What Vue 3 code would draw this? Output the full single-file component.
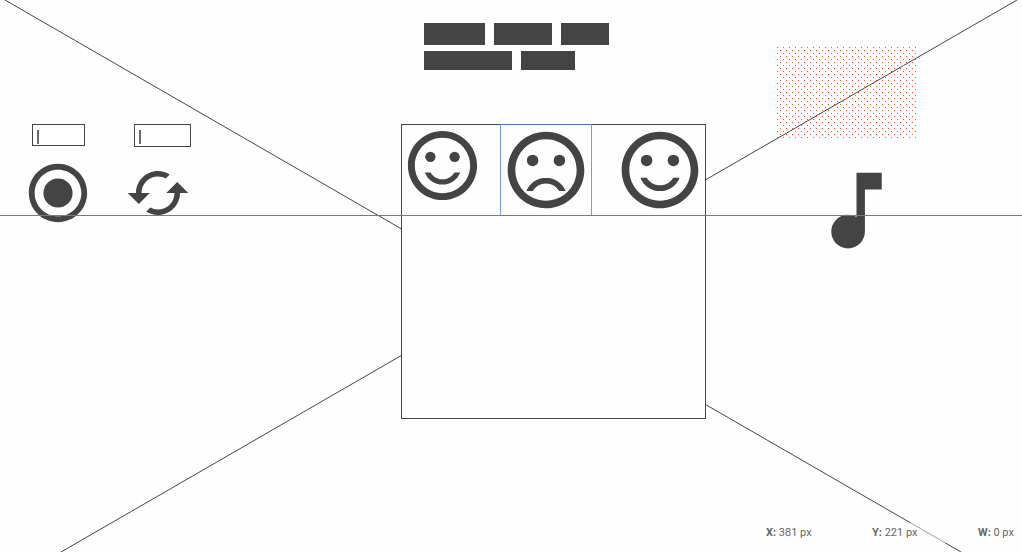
<script setup>
import { ref } from 'vue'

const RING =
  'M11.99 2C6.47 2 2 6.48 2 12s4.47 10 9.99 10C17.52 22 22 17.52 22 12S17.52 2 11.99 2zM12 20c-4.42 0-8-3.58-8-8s3.58-8 8-8 8 3.58 8 8-3.58 8-8 8z'
const SMILE =
  'M12 16c-1.48 0-2.75-.81-3.45-2H6.88c.8 2.05 2.79 3.5 5.12 3.5s4.32-1.45 5.12-3.5h-1.67c-.7 1.19-1.97 2-3.45 2z'
const FROWN =
  'M12 14c-2.33 0-4.32 1.45-5.12 3.5h1.67c.69-1.19 1.97-2 3.45-2s2.75.81 3.45 2h1.67c-.8-2.05-2.79-3.5-5.12-3.5z'

const faces = [
  { name: 'Happy', kind: 'small', mouth: SMILE },
  { name: 'Sad', kind: 'selected', mouth: FROWN },
  { name: 'Cheerful', kind: 'last', mouth: SMILE },
]
const readings = [
  { label: 'X:', value: '381 px' },
  { label: 'Y:', value: '221 px' },
  { label: 'W:', value: '0 px' },
]
const first = ref('')
const second = ref('')
</script>

<template>
  <main class="canvas">
    <svg class="diagonals" width="1022" height="552" aria-hidden="true">
      <path d="M5 0L961 552M1017 0L61 552" />
    </svg>

    <svg class="dots" width="139" height="91" aria-hidden="true">
      <defs>
        <pattern id="dot-grid" width="6" height="6" patternUnits="userSpaceOnUse">
          <rect width="1" height="1" />
          <rect x="3" y="3" width="1" height="1" />
        </pattern>
      </defs>
      <rect width="139" height="91" fill="url(#dot-grid)" />
    </svg>

    <div class="blocks" aria-hidden="true">
      <div class="block-row">
        <span class="block b61"></span>
        <span class="block b58"></span>
        <span class="block b48"></span>
      </div>
      <div class="block-row short">
        <span class="block b88"></span>
        <span class="block b54"></span>
      </div>
    </div>

    <div class="field field-a">
      <input v-model="first" type="text" aria-label="First value" />
      <span class="caret"></span>
    </div>
    <div class="field field-b">
      <input v-model="second" type="text" aria-label="Second value" />
      <span class="caret"></span>
    </div>

    <button class="icon record" type="button" aria-label="Record">
      <svg viewBox="0 0 24 24"><path :d="RING" /><circle cx="12" cy="12" r="5" /></svg>
    </button>
    <button class="icon swap" type="button" aria-label="Refresh">
      <svg viewBox="0 0 24 24">
        <path d="M19 8l-4 4h3c0 3.31-2.69 6-6 6-1.01 0-1.97-.25-2.8-.7l-1.46 1.46C8.97 19.54 10.43 20 12 20c4.42 0 8-3.58 8-8h3l-4-4zM6 12c0-3.31 2.69-6 6-6 1.01 0 1.97.25 2.8.7l1.46-1.46C15.03 4.46 13.57 4 12 4c-4.42 0-8 3.58-8 8H1l4 4 4-4H6z" />
      </svg>
    </button>

    <section class="frame">
      <button
        v-for="face in faces"
        :key="face.name"
        class="icon face"
        :class="face.kind"
        type="button"
        :aria-label="face.name"
      >
        <svg viewBox="0 0 24 24">
          <path :d="RING" />
          <circle cx="15.5" cy="9.5" r="1.5" />
          <circle cx="8.5" cy="9.5" r="1.5" />
          <path :d="face.mouth" />
        </svg>
      </button>
    </section>

    <button class="icon note" type="button" aria-label="Music">
      <svg viewBox="0 0 24 24">
        <path d="M12 3v10.55c-.59-.34-1.27-.55-2-.55-2.21 0-4 1.79-4 4s1.79 4 4 4 4-1.79 4-4V7h4V3h-6z" />
      </svg>
    </button>

    <div class="guide"></div>

    <footer class="status">
      <span v-for="r in readings" :key="r.label" class="reading">
        <b>{{ r.label }}</b> {{ r.value }}
      </span>
    </footer>
  </main>
</template>

<style>
body {
  margin: 0;
}
</style>

<style scoped>
.canvas {
  position: relative;
  display: flex;
  flex-direction: column;
  justify-content: flex-end;
  min-height: 100vh;
  overflow: hidden;
  background: #fefefe;
  color: #666;
  font-family: Roboto, sans-serif;
}
.diagonals {
  position: absolute;
  left: 0;
  top: 0;
  fill: none;
  stroke: #444;
  stroke-width: 1;
}
.dots {
  position: absolute;
  left: 777px;
  top: 47px;
}
.dots pattern rect {
  fill: #f4502f;
}
.blocks {
  position: absolute;
  left: 424px;
  top: 23px;
  display: flex;
  flex-direction: column;
  gap: 6px;
}
.block-row {
  display: flex;
  gap: 9px;
  height: 22px;
}
.block-row.short {
  height: 19px;
}
.block {
  background: #444;
}
.b61 { width: 61px; }
.b58 { width: 58px; }
.b48 { width: 48px; }
.b88 { width: 88px; }
.b54 { width: 54px; }

.field {
  position: absolute;
  top: 124px;
  width: 53px;
  height: 22px;
}
.field-a {
  left: 32px;
}
.field-b {
  left: 134px;
  width: 57px;
  height: 23px;
}
.field input {
  display: block;
  box-sizing: border-box;
  width: 100%;
  height: 100%;
  padding: 0 8px;
  border: 1px solid #444;
  border-radius: 0;
  background: #fff;
  color: #444;
  font: 12px Roboto, sans-serif;
  outline: none;
}
.caret {
  position: absolute;
  left: 5px;
  top: 6px;
  width: 2px;
  height: 14px;
  background: #6a6a6a;
}
.icon {
  display: block;
  padding: 0;
  border: 0;
  background: none;
}
.icon svg {
  display: block;
  width: 100%;
  height: 100%;
  fill: #444;
}
.record {
  position: absolute;
  left: 23px;
  top: 158px;
  width: 70px;
  height: 70px;
}
.swap {
  position: absolute;
  left: 125px;
  top: 160px;
  width: 66px;
  height: 66px;
}
.note {
  position: absolute;
  left: 806px;
  top: 160px;
  width: 101px;
  height: 101px;
}
.frame {
  position: absolute;
  left: 401px;
  top: 124px;
  display: flex;
  align-items: flex-start;
  width: 305px;
  height: 295px;
  background: #fefefe;
  box-shadow: inset 0 0 0 1px #444;
}
.face {
  width: 92px;
  height: 92px;
}
.face.small {
  width: 83px;
  height: 83px;
  margin-right: 16px;
}
.face.selected {
  box-sizing: border-box;
  background: linear-gradient(#4272c9, #4272c9) top / 100% 1px no-repeat;
  box-shadow: inset 1px 0 #6f9bef, inset -1px 0 #6f9bef;
}
.face.last {
  margin-left: 22px;
}
.guide {
  position: absolute;
  left: 0;
  right: 0;
  top: 215px;
  height: 1px;
  background: #4480f0;
}
.status {
  position: relative;
  display: flex;
  justify-content: flex-end;
  padding: 0 8px 9px 0;
  font-size: 11px;
  line-height: 20px;
  white-space: nowrap;
}
.reading {
  width: 106px;
  background: rgba(254, 254, 254, 0.5);
}
.reading:last-child {
  width: 36px;
}
.reading b {
  font-weight: 700;
}
</style>
